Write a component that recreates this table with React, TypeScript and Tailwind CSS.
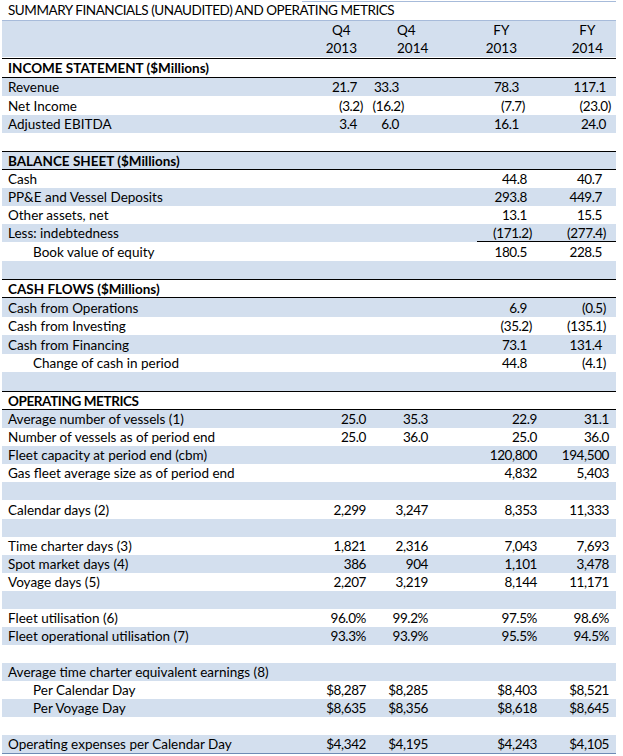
import React from "react";

type V = [string, string] | null;

interface R {
  label: string;
  type: "sec" | "row" | "ind" | "blank";
  h: string;
  blue: boolean;
  v?: V[];
  underline?: boolean;
  last?: boolean;
  track?: string;
}

const rows: R[] = [
  { label: "INCOME STATEMENT ($Millions)", type: "sec", h: "h-[20px]", blue: false },
  { label: "Revenue", type: "row", h: "h-[18px]", blue: true, v: [["21.7", "pr-[15px]"], ["33.3", "pr-[41px]"], ["78.3", "pr-[26px]"], ["117.1", "pr-[10px]"]] },
  { label: "Net Income", type: "row", h: "h-[19px]", blue: false, v: [["(3.2)", "pr-[9px]"], ["(16.2)", "pr-[36px]"], ["(7.7)", "pr-[20px]"], ["(23.0)", "pr-[5px]"]] },
  { label: "Adjusted EBITDA", type: "row", h: "h-[18px]", blue: true, v: [["3.4", "pr-[15px]"], ["6.0", "pr-[41px]"], ["16.1", "pr-[26px]"], ["24.0", "pr-[10px]"]] },
  { label: "", type: "blank", h: "h-[18px]", blue: false },
  { label: "BALANCE SHEET ($Millions)", type: "sec", h: "h-[19px]", blue: true },
  { label: "Cash", type: "row", h: "h-[18px]", blue: false, v: [null, null, ["44.8", "pr-[18px]"], ["40.7", "pr-[14px]"]] },
  { label: "PP&E and Vessel Deposits", type: "row", h: "h-[18px]", blue: true, v: [null, null, ["293.8", "pr-[18px]"], ["449.7", "pr-[14px]"]] },
  { label: "Other assets, net", type: "row", h: "h-[18px]", blue: false, v: [null, null, ["13.1", "pr-[18px]"], ["15.5", "pr-[14px]"]] },
  { label: "Less: indebtedness", type: "row", h: "h-[18px]", blue: true, underline: true, v: [null, null, ["(171.2)", "pr-[13px]"], ["(277.4)", "pr-[10px]"]] },
  { label: "Book value of equity", type: "ind", h: "h-[19px]", blue: false, v: [null, null, ["180.5", "pr-[18px]"], ["228.5", "pr-[14px]"]] },
  { label: "", type: "blank", h: "h-[18px]", blue: true },
  { label: "CASH FLOWS ($Millions)", type: "sec", h: "h-[19px]", blue: false },
  { label: "Cash from Operations", type: "row", h: "h-[19px]", blue: true, v: [null, null, ["6.9", "pr-[18px]"], ["(0.5)", "pr-[10px]"]] },
  { label: "Cash from Investing", type: "row", h: "h-[18px]", blue: false, v: [null, null, ["(35.2)", "pr-[13px]"], ["(135.1)", "pr-[10px]"]] },
  { label: "Cash from Financing", type: "row", h: "h-[19px]", blue: true, v: [null, null, ["73.1", "pr-[18px]"], ["131.4", "pr-[14px]"]] },
  { label: "Change of cash in period", type: "ind", h: "h-[18px]", blue: false, v: [null, null, ["44.8", "pr-[18px]"], ["(4.1)", "pr-[10px]"]] },
  { label: "", type: "blank", h: "h-[19px]", blue: true },
  { label: "OPERATING METRICS", type: "sec", h: "h-[19px]", blue: false, track: "tracking-[-0.4px]" },
  { label: "Average number of vessels (1)", type: "row", h: "h-[18px]", blue: true, v: [["25.0", "pr-[6px]"], ["35.3", "pr-[12px]"], ["22.9", "pr-[8px]"], ["31.1", "pr-[7px]"]] },
  { label: "Number of vessels as of period end", type: "row", h: "h-[18px]", blue: false, v: [["25.0", "pr-[6px]"], ["36.0", "pr-[12px]"], ["25.0", "pr-[8px]"], ["36.0", "pr-[7px]"]] },
  { label: "Fleet capacity at period end (cbm)", type: "row", h: "h-[18px]", blue: true, v: [null, null, ["120,800", "pr-[8px]"], ["194,500", "pr-[7px]"]] },
  { label: "Gas fleet average size as of period end", type: "row", h: "h-[18px]", blue: false, v: [null, null, ["4,832", "pr-[8px]"], ["5,403", "pr-[7px]"]] },
  { label: "", type: "blank", h: "h-[18px]", blue: true },
  { label: "Calendar days (2)", type: "row", h: "h-[19px]", blue: false, v: [["2,299", "pr-[6px]"], ["3,247", "pr-[12px]"], ["8,353", "pr-[8px]"], ["11,333", "pr-[7px]"]] },
  { label: "", type: "blank", h: "h-[18px]", blue: true },
  { label: "Time charter days (3)", type: "row", h: "h-[18px]", blue: false, v: [["1,821", "pr-[6px]"], ["2,316", "pr-[12px]"], ["7,043", "pr-[8px]"], ["7,693", "pr-[7px]"]] },
  { label: "Spot market days (4)", type: "row", h: "h-[18px]", blue: true, v: [["386", "pr-[6px]"], ["904", "pr-[12px]"], ["1,101", "pr-[8px]"], ["3,478", "pr-[7px]"]] },
  { label: "Voyage days (5)", type: "row", h: "h-[18px]", blue: false, v: [["2,207", "pr-[6px]"], ["3,219", "pr-[12px]"], ["8,144", "pr-[8px]"], ["11,171", "pr-[7px]"]] },
  { label: "", type: "blank", h: "h-[18px]", blue: true },
  { label: "Fleet utilisation (6)", type: "row", h: "h-[18px]", blue: false, v: [["96.0%", "pr-[6px]"], ["99.2%", "pr-[12px]"], ["97.5%", "pr-[8px]"], ["98.6%", "pr-[7px]"]] },
  { label: "Fleet operational utilisation (7)", type: "row", h: "h-[18px]", blue: true, v: [["93.3%", "pr-[6px]"], ["93.9%", "pr-[12px]"], ["95.5%", "pr-[8px]"], ["94.5%", "pr-[7px]"]] },
  { label: "", type: "blank", h: "h-[18px]", blue: false },
  { label: "Average time charter equivalent earnings (8)", type: "row", h: "h-[18px]", blue: true },
  { label: "Per Calendar Day", type: "ind", h: "h-[18px]", blue: false, v: [["$8,287", "pr-[6px]"], ["$8,285", "pr-[12px]"], ["$8,403", "pr-[8px]"], ["$8,521", "pr-[7px]"]] },
  { label: "Per Voyage Day", type: "ind", h: "h-[18px]", blue: true, v: [["$8,635", "pr-[6px]"], ["$8,356", "pr-[12px]"], ["$8,618", "pr-[8px]"], ["$8,645", "pr-[7px]"]] },
  { label: "", type: "blank", h: "h-[18px]", blue: false },
  { label: "Operating expenses per Calendar Day", type: "row", h: "h-[19px]", blue: true, last: true, v: [["$4,342", "pr-[6px]"], ["$4,195", "pr-[12px]"], ["$4,243", "pr-[8px]"], ["$4,105", "pr-[7px]"]] },
];

const colW = ["w-[70px]", "w-[68px]", "w-[105px]", "w-[71px]"];

function Row({ r }: { r: R }) {
  const bg = r.blue ? "bg-[#D3DFEE]" : "bg-white";
  const border =
    r.type === "sec"
      ? "border-y border-black"
      : r.last
      ? "border-b border-[#6E8BB5]"
      : "";
  return (
    <div className={`flex ${r.h} ${bg} ${border}`}>
      <div
        className={`w-[300px] shrink-0 flex items-center whitespace-nowrap ${
          r.type === "ind" ? "pl-[31px]" : "pl-[6px]"
        } ${r.type === "sec" ? "font-bold" : ""} ${r.track ?? ""}`}
      >
        {r.label}
      </div>
      {colW.map((w, i) => {
        const v = r.v ? r.v[i] : null;
        const ul = r.underline && i >= 2;
        return (
          <div key={i} className={`${w} shrink-0 flex`}>
            <div
              className={`flex-1 flex items-center justify-end whitespace-nowrap tracking-[-0.4px] ${
                v ? v[1] : ""
              } ${ul ? "border-b border-black" : ""} ${
                ul && i === 2 ? "ml-[37px]" : ""
              }`}
            >
              {v ? v[0] : ""}
            </div>
          </div>
        );
      })}
    </div>
  );
}

export default function App() {
  return (
    <div
      className="w-[623px] h-[756px] bg-white text-black text-[13.5px] leading-[18px] overflow-hidden"
      style={{ fontFamily: "Lato, 'Open Sans', sans-serif" }}
    >
      <div className="ml-[2px] w-[614px]">
        <div className="relative h-[20px] flex items-center pl-[6px] whitespace-nowrap tracking-[-0.45px]">
          <div className="absolute left-[300px] right-0 top-[1px] h-px bg-[#A7BBDA]" />
          SUMMARY FINANCIALS (UNAUDITED) AND OPERATING METRICS
        </div>
        <div className="border-t border-[#A7BBDA] h-[37px] bg-[#D3DFEE] flex">
          <div className="w-[300px] shrink-0" />
          <div className="w-[70px] shrink-0 flex justify-end pr-[15px]">
            <div className="flex flex-col items-center">
              <span>Q4</span>
              <span>2013</span>
            </div>
          </div>
          <div className="w-[68px] shrink-0 flex justify-start pl-[25px]">
            <div className="flex flex-col items-start">
              <span>Q4</span>
              <span>2014</span>
            </div>
          </div>
          <div className="w-[105px] shrink-0 flex justify-end pr-[28px]">
            <div className="flex flex-col items-center">
              <span>FY</span>
              <span>2013</span>
            </div>
          </div>
          <div className="w-[71px] shrink-0 flex justify-end pr-[13px]">
            <div className="flex flex-col items-center">
              <span>FY</span>
              <span>2014</span>
            </div>
          </div>
        </div>
        <div className="h-[1px]" />
        {rows.map((r, i) => (
          <Row key={i} r={r} />
        ))}
      </div>
    </div>
  );
}
